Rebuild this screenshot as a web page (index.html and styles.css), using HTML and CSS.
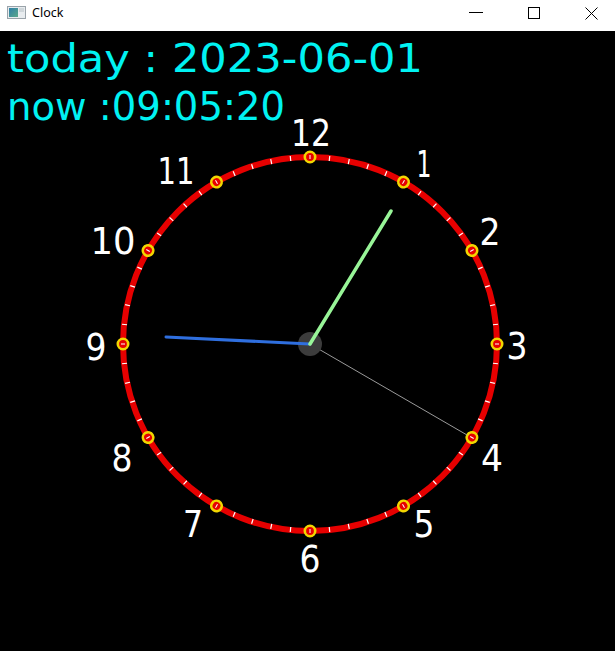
FILE: index.html
```html
<!DOCTYPE html>
<html>
<head>
<meta charset="utf-8">
<link rel="stylesheet" href="styles.css">
</head>
<body>
<div class="window">
  <div class="titlebar">
    <svg class="app-icon" width="19" height="13" viewBox="0 0 19 13">
      <defs>
        <linearGradient id="g" x1="0" y1="0" x2="1" y2="1">
          <stop offset="0" stop-color="#2f7fa8"/>
          <stop offset="1" stop-color="#5aa88a"/>
        </linearGradient>
      </defs>
      <rect x="0.5" y="0.5" width="18" height="12" fill="#e8ecef" stroke="#9aa3aa"/>
      <rect x="2" y="2" width="9" height="9" fill="url(#g)"/>
      <rect x="12" y="2" width="5" height="4" fill="#cfd6da"/>
    </svg>
    <span class="title">Clock</span>
    <div class="controls">
      <svg class="ctl" width="14" height="13" viewBox="0 0 14 13"><line x1="0" y1="5.5" x2="14" y2="5.5" stroke="#000" stroke-width="1"/></svg>
      <svg class="ctl" width="12" height="13" viewBox="0 0 12 13"><rect x="0.5" y="0.5" width="11" height="11" fill="none" stroke="#000" stroke-width="1"/></svg>
      <svg class="ctl" width="13" height="13" viewBox="0 0 13 13"><path d="M0.5 0.5 L12.5 12.5 M12.5 0.5 L0.5 12.5" stroke="#000" stroke-width="1"/></svg>
    </div>
  </div>
  <div class="canvas">
    <svg class="clock" width="615" height="620" viewBox="0 0 615 620">
      <g class="info">
        <text x="7" y="41" textLength="416" lengthAdjust="spacingAndGlyphs">today : 2023-06-01</text>
        <text x="7" y="89" textLength="278" lengthAdjust="spacingAndGlyphs">now :09:05:20</text>
      </g>
      <circle cx="310" cy="313" r="187" fill="none" stroke="#e60000" stroke-width="6"/>
      <g class="ticks" stroke="#ffffff" stroke-width="1.2">
        <line x1="310" y1="129" x2="310" y2="124" transform="rotate(6 310 313)"/>
        <line x1="310" y1="129" x2="310" y2="124" transform="rotate(12 310 313)"/>
        <line x1="310" y1="129" x2="310" y2="124" transform="rotate(18 310 313)"/>
        <line x1="310" y1="129" x2="310" y2="124" transform="rotate(24 310 313)"/>
        <line x1="310" y1="129" x2="310" y2="124" transform="rotate(36 310 313)"/>
        <line x1="310" y1="129" x2="310" y2="124" transform="rotate(42 310 313)"/>
        <line x1="310" y1="129" x2="310" y2="124" transform="rotate(48 310 313)"/>
        <line x1="310" y1="129" x2="310" y2="124" transform="rotate(54 310 313)"/>
        <line x1="310" y1="129" x2="310" y2="124" transform="rotate(66 310 313)"/>
        <line x1="310" y1="129" x2="310" y2="124" transform="rotate(72 310 313)"/>
        <line x1="310" y1="129" x2="310" y2="124" transform="rotate(78 310 313)"/>
        <line x1="310" y1="129" x2="310" y2="124" transform="rotate(84 310 313)"/>
        <line x1="310" y1="129" x2="310" y2="124" transform="rotate(96 310 313)"/>
        <line x1="310" y1="129" x2="310" y2="124" transform="rotate(102 310 313)"/>
        <line x1="310" y1="129" x2="310" y2="124" transform="rotate(108 310 313)"/>
        <line x1="310" y1="129" x2="310" y2="124" transform="rotate(114 310 313)"/>
        <line x1="310" y1="129" x2="310" y2="124" transform="rotate(126 310 313)"/>
        <line x1="310" y1="129" x2="310" y2="124" transform="rotate(132 310 313)"/>
        <line x1="310" y1="129" x2="310" y2="124" transform="rotate(138 310 313)"/>
        <line x1="310" y1="129" x2="310" y2="124" transform="rotate(144 310 313)"/>
        <line x1="310" y1="129" x2="310" y2="124" transform="rotate(156 310 313)"/>
        <line x1="310" y1="129" x2="310" y2="124" transform="rotate(162 310 313)"/>
        <line x1="310" y1="129" x2="310" y2="124" transform="rotate(168 310 313)"/>
        <line x1="310" y1="129" x2="310" y2="124" transform="rotate(174 310 313)"/>
        <line x1="310" y1="129" x2="310" y2="124" transform="rotate(186 310 313)"/>
        <line x1="310" y1="129" x2="310" y2="124" transform="rotate(192 310 313)"/>
        <line x1="310" y1="129" x2="310" y2="124" transform="rotate(198 310 313)"/>
        <line x1="310" y1="129" x2="310" y2="124" transform="rotate(204 310 313)"/>
        <line x1="310" y1="129" x2="310" y2="124" transform="rotate(216 310 313)"/>
        <line x1="310" y1="129" x2="310" y2="124" transform="rotate(222 310 313)"/>
        <line x1="310" y1="129" x2="310" y2="124" transform="rotate(228 310 313)"/>
        <line x1="310" y1="129" x2="310" y2="124" transform="rotate(234 310 313)"/>
        <line x1="310" y1="129" x2="310" y2="124" transform="rotate(246 310 313)"/>
        <line x1="310" y1="129" x2="310" y2="124" transform="rotate(252 310 313)"/>
        <line x1="310" y1="129" x2="310" y2="124" transform="rotate(258 310 313)"/>
        <line x1="310" y1="129" x2="310" y2="124" transform="rotate(264 310 313)"/>
        <line x1="310" y1="129" x2="310" y2="124" transform="rotate(276 310 313)"/>
        <line x1="310" y1="129" x2="310" y2="124" transform="rotate(282 310 313)"/>
        <line x1="310" y1="129" x2="310" y2="124" transform="rotate(288 310 313)"/>
        <line x1="310" y1="129" x2="310" y2="124" transform="rotate(294 310 313)"/>
        <line x1="310" y1="129" x2="310" y2="124" transform="rotate(306 310 313)"/>
        <line x1="310" y1="129" x2="310" y2="124" transform="rotate(312 310 313)"/>
        <line x1="310" y1="129" x2="310" y2="124" transform="rotate(318 310 313)"/>
        <line x1="310" y1="129" x2="310" y2="124" transform="rotate(324 310 313)"/>
        <line x1="310" y1="129" x2="310" y2="124" transform="rotate(336 310 313)"/>
        <line x1="310" y1="129" x2="310" y2="124" transform="rotate(342 310 313)"/>
        <line x1="310" y1="129" x2="310" y2="124" transform="rotate(348 310 313)"/>
        <line x1="310" y1="129" x2="310" y2="124" transform="rotate(354 310 313)"/>
      </g>
      <g class="marks">
        <g class="mark"><circle cx="310" cy="126" r="5.2"/><line x1="310" y1="128" x2="310" y2="124"/></g>
        <g class="mark" transform="rotate(30 310 313)"><circle cx="310" cy="126" r="5.2"/><line x1="310" y1="128" x2="310" y2="124"/></g>
        <g class="mark" transform="rotate(60 310 313)"><circle cx="310" cy="126" r="5.2"/><line x1="310" y1="128" x2="310" y2="124"/></g>
        <g class="mark" transform="rotate(90 310 313)"><circle cx="310" cy="126" r="5.2"/><line x1="310" y1="128" x2="310" y2="124"/></g>
        <g class="mark" transform="rotate(120 310 313)"><circle cx="310" cy="126" r="5.2"/><line x1="310" y1="128" x2="310" y2="124"/></g>
        <g class="mark" transform="rotate(150 310 313)"><circle cx="310" cy="126" r="5.2"/><line x1="310" y1="128" x2="310" y2="124"/></g>
        <g class="mark" transform="rotate(180 310 313)"><circle cx="310" cy="126" r="5.2"/><line x1="310" y1="128" x2="310" y2="124"/></g>
        <g class="mark" transform="rotate(210 310 313)"><circle cx="310" cy="126" r="5.2"/><line x1="310" y1="128" x2="310" y2="124"/></g>
        <g class="mark" transform="rotate(240 310 313)"><circle cx="310" cy="126" r="5.2"/><line x1="310" y1="128" x2="310" y2="124"/></g>
        <g class="mark" transform="rotate(270 310 313)"><circle cx="310" cy="126" r="5.2"/><line x1="310" y1="128" x2="310" y2="124"/></g>
        <g class="mark" transform="rotate(300 310 313)"><circle cx="310" cy="126" r="5.2"/><line x1="310" y1="128" x2="310" y2="124"/></g>
        <g class="mark" transform="rotate(330 310 313)"><circle cx="310" cy="126" r="5.2"/><line x1="310" y1="128" x2="310" y2="124"/></g>
      </g>
      <g class="nums">
        <text x="311" y="115" textLength="40" lengthAdjust="spacingAndGlyphs">12</text>
        <text x="424" y="146" textLength="15" lengthAdjust="spacingAndGlyphs">1</text>
        <text x="490" y="214" textLength="21" lengthAdjust="spacingAndGlyphs">2</text>
        <text x="517" y="328" textLength="21" lengthAdjust="spacingAndGlyphs">3</text>
        <text x="492" y="440" textLength="22" lengthAdjust="spacingAndGlyphs">4</text>
        <text x="424" y="506" textLength="21" lengthAdjust="spacingAndGlyphs">5</text>
        <text x="310" y="541" textLength="21" lengthAdjust="spacingAndGlyphs">6</text>
        <text x="193" y="506" textLength="20" lengthAdjust="spacingAndGlyphs">7</text>
        <text x="122" y="440" textLength="21" lengthAdjust="spacingAndGlyphs">8</text>
        <text x="96" y="329" textLength="21" lengthAdjust="spacingAndGlyphs">9</text>
        <text x="113" y="223" textLength="45" lengthAdjust="spacingAndGlyphs">10</text>
        <text x="176" y="153" textLength="37" lengthAdjust="spacingAndGlyphs">11</text>
      </g>
      <line x1="310" y1="313" x2="467" y2="404" stroke="#9a9a9a" stroke-width="1"/>
      <circle cx="310" cy="313" r="12" fill="#3c3c3c"/>
      <line x1="310" y1="313" x2="166" y2="306" stroke="#2f6fdf" stroke-width="3" stroke-linecap="round"/>
      <line x1="310" y1="313" x2="391" y2="180" stroke="#98f598" stroke-width="3.5" stroke-linecap="round"/>
    </svg>
  </div>
</div>
</body>
</html>
```

FILE: styles.css
```css
html, body {
  margin: 0;
  padding: 0;
  background: #000;
}
.window {
  width: 615px;
  height: 651px;
  display: flex;
  flex-direction: column;
  overflow: hidden;
}
.titlebar {
  height: 31px;
  flex: none;
  background: #fff;
  display: flex;
  align-items: flex-start;
  font-family: "Noto Sans", "Liberation Sans", sans-serif;
  font-size: 12.5px;
  color: #000;
}
.app-icon {
  margin: 6px 0 0 7px;
}
.title {
  margin: 4px 0 0 6px;
  line-height: 17px;
}
.controls {
  margin-left: auto;
  margin-right: 17px;
  display: flex;
  gap: 45px;
  padding-top: 7px;
}
.canvas {
  flex: 1;
  background: #000;
}
.clock {
  display: block;
}
.info text {
  font-family: "DejaVu Sans", sans-serif;
  font-size: 39px;
  fill: #00f2f2;
}
.nums text {
  font-family: "DejaVu Sans", sans-serif;
  font-size: 38px;
  fill: #fff;
  text-anchor: middle;
}
.mark circle {
  fill: #e60000;
  stroke: #f2d600;
  stroke-width: 2.6;
}
.mark line {
  stroke: #fff;
  stroke-width: 1;
}
```
